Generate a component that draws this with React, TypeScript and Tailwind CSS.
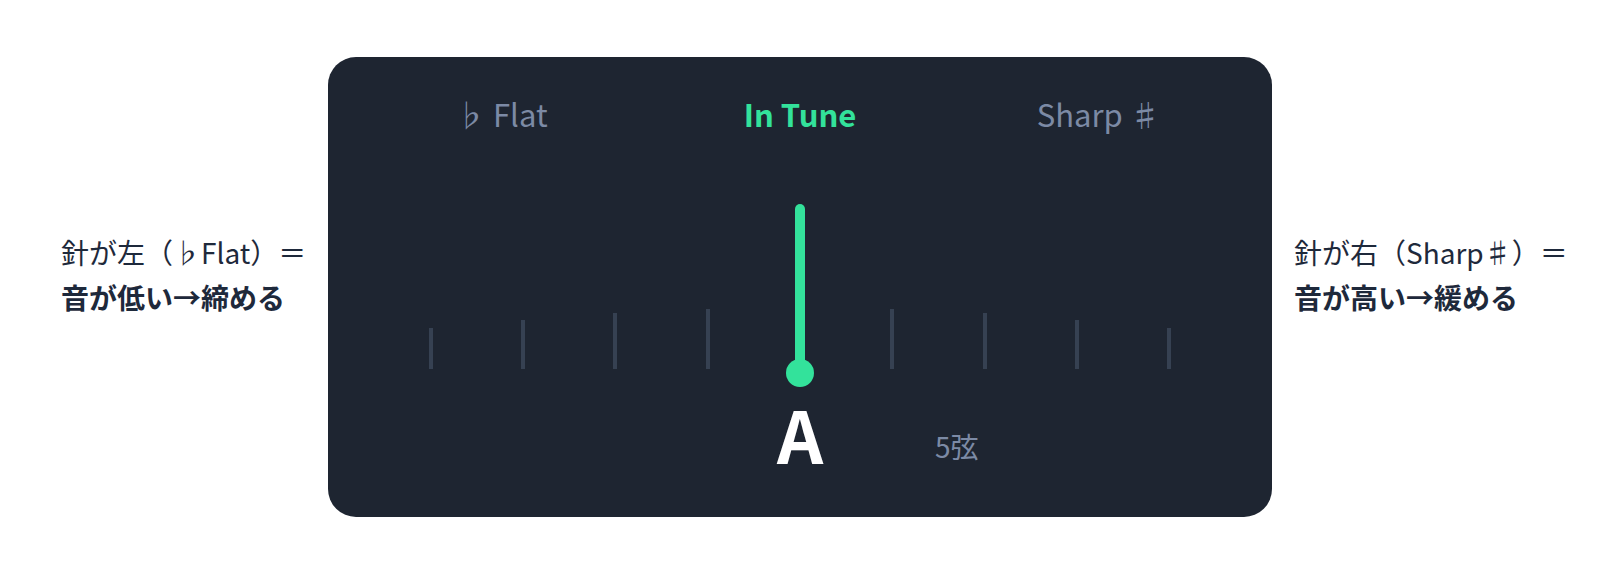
import React from "react";

const font = { fontFamily: '"Noto Sans CJK JP", "Noto Sans", sans-serif' };

const tickHeights = [41, 49, 56, 60, 0, 60, 56, 49, 41];

export default function App() {
  return (
    <div
      className="w-[1600px] h-[574px] bg-white flex items-center justify-center gap-[22px]"
      style={font}
    >
      <div className="w-[245px] mb-[25px] text-[28px] leading-[45px] text-[#1e293b] whitespace-nowrap">
        <div>針が左（♭Flat）＝</div>
        <div className="font-bold">音が低い→締める</div>
      </div>

      <div className="w-[944px] h-[460px] rounded-[28px] bg-[#1e2531] flex flex-col pt-[34px] px-[24px]">
        <div className="grid grid-cols-3 text-center text-[31px] leading-[45px]">
          <div className="text-[#7c8aa5]">♭ Flat</div>
          <div className="text-[#33e29b] font-bold">In Tune</div>
          <div className="text-[#7c8aa5]">Sharp ♯</div>
        </div>

        <div className="mt-[68px] mx-auto w-[831px] h-[183px] grid grid-cols-9">
          {tickHeights.map((h, i) =>
            i === 4 ? (
              <div key={i} className="flex flex-col items-center">
                <div className="w-[10px] h-[169px] rounded-full bg-[#33e29b]" />
                <div className="-mt-[14px] w-[28px] h-[28px] rounded-full bg-[#33e29b]" />
              </div>
            ) : (
              <div key={i} className="flex justify-center items-end pb-[18px]">
                <div className="w-[4px] bg-[#364152]" style={{ height: h }} />
              </div>
            )
          )}
        </div>

        <div className="mt-[10px] grid grid-cols-[1fr_auto_1fr] items-start">
          <div />
          <div className="text-[72px] leading-none font-bold text-white">A</div>
          <div className="pl-[112px] mt-[35px] text-[28px] leading-none text-[#7c8aa5]">5弦</div>
        </div>
      </div>

      <div className="w-[245px] mb-[25px] text-[28px] leading-[45px] text-[#1e293b] whitespace-nowrap">
        <div>針が右（Sharp♯）＝</div>
        <div className="font-bold">音が高い→緩める</div>
      </div>
    </div>
  );
}
